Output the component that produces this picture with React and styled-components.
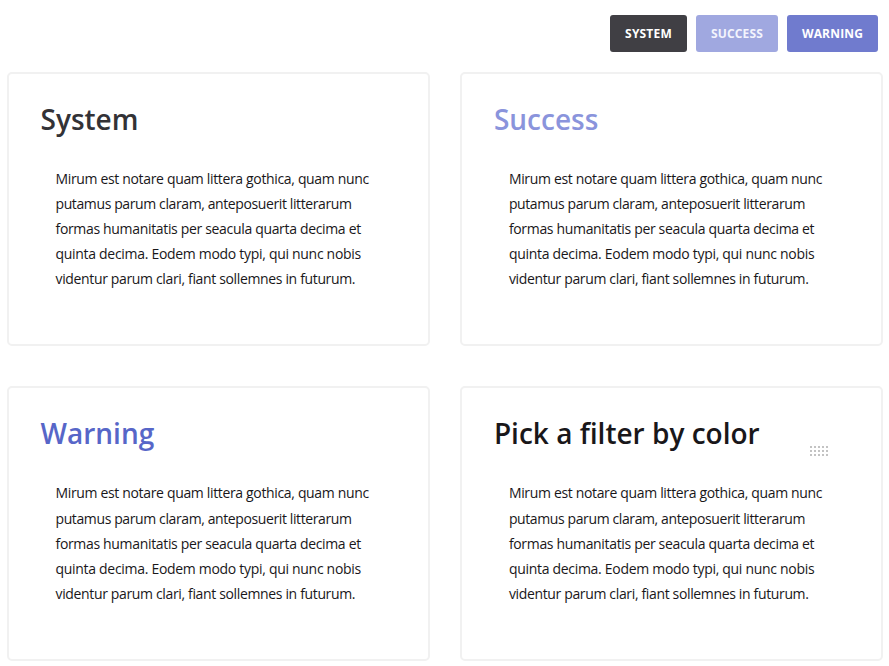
import React from "react";
import styled, { createGlobalStyle } from "styled-components";

const GlobalStyle = createGlobalStyle`
  *, *::before, *::after { box-sizing: border-box; }
  body { margin: 0; background: #fff; overflow: hidden; }
`;

const Page = styled.main`
  width: 889px;
  height: 666px;
  padding: 15px 6px 0 7px;
  font-family: "Open Sans", "Noto Sans", sans-serif;
  color: #19171a;
`;

const Toolbar = styled.nav`
  display: flex;
  justify-content: flex-end;
  gap: 9px;
  padding-right: 5px;
  margin-bottom: 20px;
`;

const FilterButton = styled.button`
  width: ${(p) => p.$width}px;
  height: 37px;
  padding: 0;
  border: 0;
  border-radius: 3px;
  background: ${(p) => p.$background};
  color: ${(p) => p.$color};
  font: 700 12px/37px "Open Sans", sans-serif;
  letter-spacing: 0.18px;
  text-align: center;
  text-transform: uppercase;
`;

const Grid = styled.div`
  display: grid;
  grid-template-columns: 423px 423px;
  grid-auto-rows: 274.4px;
  gap: 40.07px 30.4px;
`;

const Card = styled.section`
  position: relative;
  border: 2px solid #f1f1f1;
  border-radius: 5px;
  padding: 24px 31px;
`;

const Title = styled.h2`
  margin: 0 0 0 0.5px;
  font-size: 28px;
  line-height: 42px;
  font-weight: 600;
  color: ${(p) => p.$color};
  white-space: nowrap;
`;

const Copy = styled.p`
  margin: 26px 0 0 15.5px;
  font-size: 14px;
  line-height: 25.1px;
`;

const Line = styled.span`
  display: block;
  white-space: nowrap;
  letter-spacing: ${(p) => p.$spacing}px;
`;

const DragHandle = styled.svg`
  position: absolute;
  left: 347.6px;
  top: 58px;
  fill: #c3c3c3;
`;

const filters = [
  { label: "System", width: 77, background: "#403f44", color: "#fff" },
  { label: "Success", width: 82, background: "#a0a8e0", color: "#f3f4fd" },
  { label: "Warning", width: 91, background: "#707bce", color: "#fff" },
];

const cards = [
  { title: "System", color: "#333236" },
  { title: "Success", color: "#8a94dc" },
  { title: "Warning", color: "#5766c8" },
  { title: "Pick a filter by color", color: "#19171a", handle: true },
];

const lines = [
  ["Mirum est notare quam littera gothica, quam nunc", -0.34],
  ["putamus parum claram, anteposuerit litterarum", -0.39],
  ["formas humanitatis per seacula quarta decima et", -0.33],
  ["quinta decima. Eodem modo typi, qui nunc nobis", -0.3],
  ["videntur parum clari, fiant sollemnes in futurum.", -0.35],
];

function DotGrid() {
  return (
    <DragHandle width="18" height="10" viewBox="0 0 18 10" shapeRendering="crispEdges">
      {[0, 4, 8].map((y) =>
        [0, 4, 8, 12, 16].map((x) => <rect key={`${x}-${y}`} x={x} y={y} width="2" height="2" />)
      )}
    </DragHandle>
  );
}

export default function App() {
  return (
    <>
      <GlobalStyle />
      <Page>
        <Toolbar>
          {filters.map((f) => (
            <FilterButton key={f.label} $width={f.width} $background={f.background} $color={f.color}>
              {f.label}
            </FilterButton>
          ))}
        </Toolbar>
        <Grid>
          {cards.map((card) => (
            <Card key={card.title}>
              <Title $color={card.color}>{card.title}</Title>
              <Copy>
                {lines.map(([text, spacing]) => (
                  <Line key={text} $spacing={spacing}>{text} </Line>
                ))}
              </Copy>
              {card.handle && <DotGrid />}
            </Card>
          ))}
        </Grid>
      </Page>
    </>
  );
}
